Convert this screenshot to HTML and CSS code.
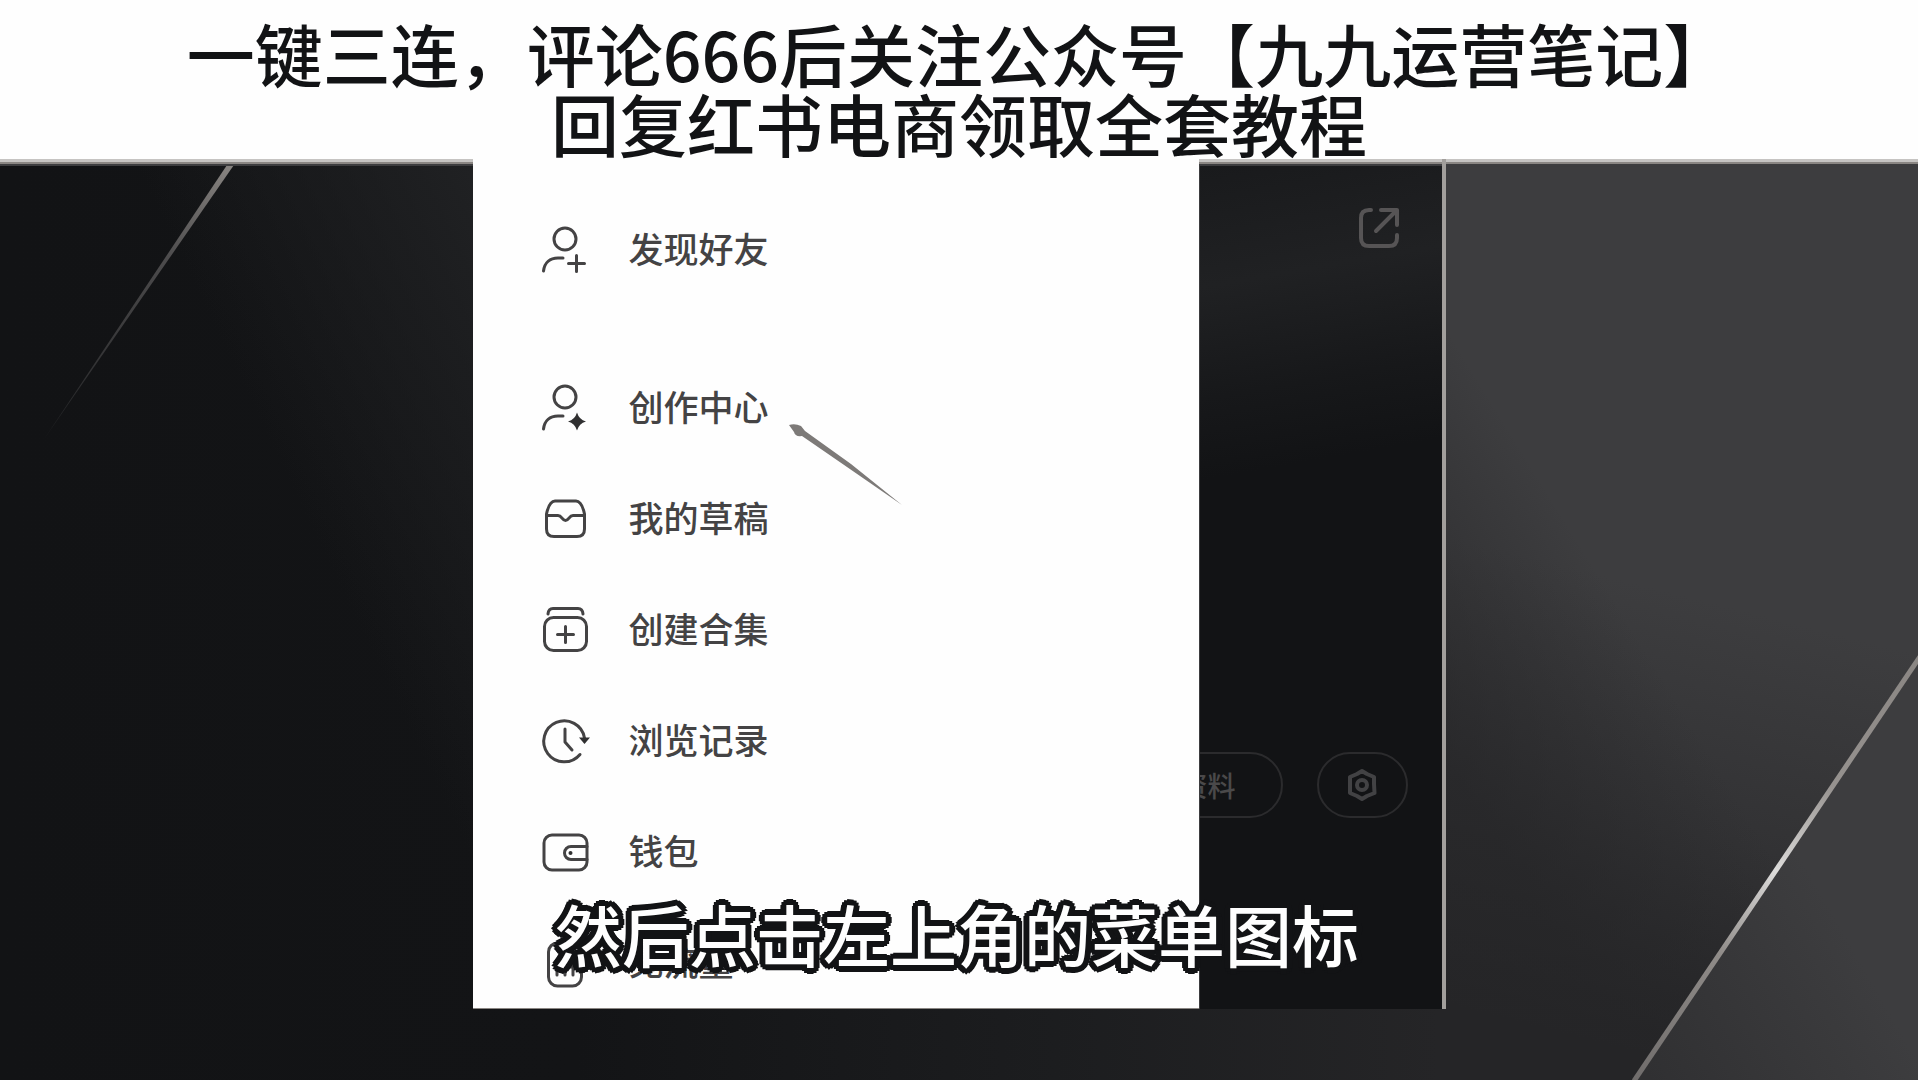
FILE: index.html
```html
<!DOCTYPE html>
<html lang="zh-CN">
<head>
<meta charset="utf-8">
<meta name="viewport" content="width=device-width, initial-scale=1">
<title>九九运营笔记</title>
<link rel="stylesheet" href="styles.css">
</head>
<body>
<header class="banner">
  <h1 class="banner-title">一键三连，评论666后关注公众号【九九运营笔记】<br>回复红书电商领取全套教程</h1>
</header>
<main class="stage">
  <svg class="backdrop" viewBox="0 0 1918 921" preserveAspectRatio="none" aria-hidden="true">
    <defs>
      <linearGradient id="floor" x1="0" y1="0" x2="1" y2="0">
        <stop offset="0" stop-color="#121315"/>
        <stop offset="0.3" stop-color="#131416"/>
        <stop offset="0.55" stop-color="#1c1d1f"/>
        <stop offset="0.75" stop-color="#252527"/>
        <stop offset="1" stop-color="#252527"/>
      </linearGradient>
      <linearGradient id="glow" gradientUnits="userSpaceOnUse" x1="230" y1="200" x2="520" y2="60">
        <stop offset="0" stop-color="#212224" stop-opacity="0"/>
        <stop offset="1" stop-color="#212224"/>
      </linearGradient>
      <linearGradient id="wall" gradientUnits="userSpaceOnUse" x1="1700" y1="440" x2="1590" y2="880">
        <stop offset="0" stop-color="#3d3d3f"/>
        <stop offset="0.5" stop-color="#323234"/>
        <stop offset="1" stop-color="#252527"/>
      </linearGradient>
      <linearGradient id="shade" gradientUnits="userSpaceOnUse" x1="1446" y1="600" x2="1640" y2="480">
        <stop offset="0" stop-color="#252527" stop-opacity="0.7"/>
        <stop offset="1" stop-color="#252527" stop-opacity="0"/>
      </linearGradient>
      <linearGradient id="corner" gradientUnits="userSpaceOnUse" x1="1650" y1="921" x2="1860" y2="800">
        <stop offset="0" stop-color="#303032"/>
        <stop offset="1" stop-color="#3d3d3f"/>
      </linearGradient>
      <linearGradient id="ray-left" gradientUnits="userSpaceOnUse" x1="232" y1="3" x2="45" y2="279">
        <stop offset="0" stop-color="#8a8683"/>
        <stop offset="0.35" stop-color="#4c4b4c"/>
        <stop offset="1" stop-color="#222325"/>
      </linearGradient>
      <linearGradient id="ray-right" gradientUnits="userSpaceOnUse" x1="1918" y1="499" x2="1633" y2="921">
        <stop offset="0" stop-color="#8a8683"/>
        <stop offset="0.3" stop-color="#96928f"/>
        <stop offset="0.5" stop-color="#dcdbda"/>
        <stop offset="0.7" stop-color="#8f8b88"/>
        <stop offset="1" stop-color="#6f6c6b"/>
      </linearGradient>
    </defs>
    <rect width="1918" height="921" fill="url(#floor)"/>
    <rect width="600" height="849" fill="url(#glow)"/>
    <rect x="1446" width="472" height="921" fill="url(#wall)"/>
    <rect x="1446" width="472" height="921" fill="url(#shade)"/>
    <path d="M1918 499V921H1633Z" fill="url(#corner)"/>
    <path d="M236 3L229 3L44 280Z" fill="url(#ray-left)"/>
    <path d="M1920 497L1634 921" stroke="url(#ray-right)" stroke-width="5"/>
    <rect width="1918" height="3" fill="#c6c4c2"/>
    <rect y="3" width="1918" height="2" fill="#8a8683"/>
    <rect y="5" width="1918" height="2" fill="#3d3d3f"/>
  </svg>
  <section class="frame">
    <nav class="menu" aria-label="菜单">
      <ul class="menu-list">
        <li class="menu-row">
          <a class="menu-link" href="#friends">
            <svg class="icon" viewBox="0 0 48 48" aria-hidden="true"><circle cx="24" cy="14" r="11"/><path d="M2.500 46C3.500 37.500 9 33 17 33H22M35.500 30.500V46.500M27.500 38.500H43.500"/></svg>
            <span>发现好友</span>
          </a>
        </li>
        <li class="menu-row menu-row-split">
          <a class="menu-link" href="#creator">
            <svg class="icon" viewBox="0 0 48 48" aria-hidden="true"><circle cx="24" cy="14" r="11"/><path d="M2.500 46C3.500 37.500 9 33 17 33H22"/><path class="solid" d="M36 29.500Q38 36.500 45 38.500Q38 40.500 36 47.500Q34 40.500 27 38.500Q34 36.500 36 29.500Z"/></svg>
            <span>创作中心</span>
          </a>
          <svg class="pointer" viewBox="0 0 114 82" aria-hidden="true"><path d="M0 1Q6 -1 12 2L16 7L62 40L113 81L58 43L13 12Q6 13 5 8Z"/></svg>
        </li>
        <li class="menu-row">
          <a class="menu-link" href="#drafts">
            <svg class="icon" viewBox="0 0 48 48" aria-hidden="true"><path d="M14 7H35C40 7 42 13 43.500 20V35Q43.500 42.500 36 42.500H13Q5.500 42.500 5.500 35V20C7 13 9 7 14 7ZM6 21.500H17C21 21.500 21 26.500 24.500 26.500S28 21.500 32 21.500H43"/></svg>
            <span>我的草稿</span>
          </a>
        </li>
        <li class="menu-row">
          <a class="menu-link" href="#collections">
            <svg class="icon" viewBox="0 0 48 48" aria-hidden="true"><path d="M7 9Q7.500 3.500 12 3.500H37Q41.500 3.500 42 9M24.500 21.500V37.500M16.500 29.500H32.500"/><rect x="3.500" y="12.500" width="42" height="33" rx="9"/></svg>
            <span>创建合集</span>
          </a>
        </li>
        <li class="menu-row">
          <a class="menu-link" href="#history">
            <svg class="icon" viewBox="0 0 48 48" aria-hidden="true"><path d="M43.500 22A20.500 20.500 0 1 0 39 38.500M24 13V26L31 34"/><path class="solid" d="M38 21.500H49L43.500 28Z"/></svg>
            <span>浏览记录</span>
          </a>
        </li>
        <li class="menu-row">
          <a class="menu-link" href="#wallet">
            <svg class="icon" viewBox="0 0 48 48" aria-hidden="true"><rect x="3" y="8" width="43" height="35" rx="8"/><path d="M46 19.500H30A6.500 6.500 0 0 0 30 32.500H46"/><circle class="solid" cx="29.500" cy="26" r="2"/></svg>
            <span>钱包</span>
          </a>
        </li>
        <li class="menu-row">
          <a class="menu-link" href="#data">
            <svg class="icon" viewBox="0 0 48 48" aria-hidden="true"><rect x="7.500" y="5" width="33" height="43" rx="9"/><path d="M16 37V24M24 37V27M32 37V24M16 29H32"/></svg>
            <span>免流量</span>
          </a>
        </li>
      </ul>
    </nav>
    <div class="profile">
      <button class="share" type="button" aria-label="分享">
        <svg class="share-icon" viewBox="0 0 42 42" aria-hidden="true"><path d="M13 3H11Q3 3 3 11V31Q3 39 11 39H31Q39 39 39 31V28M23 3H39V18M39 3L18 24"/></svg>
      </button>
      <div class="profile-actions">
        <button class="pill pill-edit" type="button">资料</button>
        <button class="pill pill-settings" type="button" aria-label="设置">
          <svg class="gear" viewBox="0 0 34 34" aria-hidden="true"><path d="M17 3L22 6L29 9V16L29.500 25L22 28L17 31L12 28L5 25V16L5 9L12 6Z"/><circle cx="17" cy="17" r="5"/></svg>
        </button>
      </div>
    </div>
    <p class="caption">然后点击左上角的菜单图标</p>
  </section>
</main>
</body>
</html>
```
FILE: styles.css
```css
* {
  box-sizing: border-box;
}

body {
  margin: 0;
  min-height: 100vh;
  display: flex;
  flex-direction: column;
  background: #121315;
  color: #121315;
  font-family: "Noto Sans CJK SC", sans-serif;
}

.banner {
  padding: 18px 0 0;
  min-height: 159px;
  background: #fefefe;
  text-align: center;
}

.banner-title {
  margin: 0;
  font-size: 68px;
  line-height: 70px;
  font-weight: 500;
}

.stage {
  position: relative;
  flex: 1;
  display: flex;
  justify-content: center;
  padding-bottom: 72px;
}

.backdrop {
  position: absolute;
  inset: 0;
  width: 100%;
  height: 100%;
}

.frame {
  position: relative;
  display: grid;
  grid-template-columns: 3fr 1fr;
  width: 100%;
  max-width: 973px;
  overflow: hidden;
  background: #121315;
  border-right: 4px solid #a29f9c;
}

.menu {
  padding: 66px 0 22px 68px;
  background: #fefefe;
  border-bottom: 1px solid #8a8683;
}

.menu-list {
  display: flex;
  flex-direction: column;
  gap: 63px;
  margin: 0;
  padding: 0;
  list-style: none;
}

.menu-row {
  position: relative;
}

.menu-row-split {
  margin-top: 47px;
}

.menu-link {
  display: flex;
  align-items: center;
  gap: 40px;
  height: 48px;
  color: #444344;
  font-size: 35px;
  line-height: 44px;
  font-weight: 500;
  text-decoration: none;
}

.menu-link span {
  padding-bottom: 2px;
}

.icon {
  width: 48px;
  height: 48px;
  overflow: visible;
  fill: none;
  stroke: #444344;
  stroke-width: 3;
  stroke-linecap: round;
  stroke-linejoin: round;
}

.icon .solid {
  fill: #303031;
  stroke: none;
}

.pointer {
  position: absolute;
  left: 248px;
  top: 41px;
  width: 114px;
  height: 82px;
  overflow: visible;
  fill: #7d7a78;
}

.profile {
  display: flex;
  flex-direction: column;
  align-items: flex-end;
  overflow: hidden;
  padding: 41px 34px 0 0;
  border-left: 1px solid #6b6968;
  border-top: 7px solid #6b6968;
  border-image: linear-gradient(#c6c4c2 0 3px, #8a8683 3px 5px, #3d3d3f 5px) 7 0 0 1;
  background: linear-gradient(170deg, #191a1c 0, #202123 120px, #17181a 230px, #121315 310px);
}

.share {
  margin-right: 8px;
  padding: 0;
  border: 0;
  background: none;
  line-height: 0;
}

.share-icon {
  width: 42px;
  height: 42px;
  fill: none;
  stroke: #565455;
  stroke-width: 4;
  stroke-linecap: round;
  stroke-linejoin: round;
}

.profile-actions {
  display: flex;
  justify-content: flex-end;
  gap: 34px;
  margin-top: 503px;
}

.pill {
  height: 66px;
  border: 2px solid #2b2b2d;
  border-radius: 33px;
  background: none;
  color: #4a494a;
  font-family: inherit;
  font-size: 28px;
  line-height: 40px;
  white-space: nowrap;
}

.pill-edit {
  flex: none;
  padding: 0 45px;
  font-weight: 500;
}

.pill-settings {
  display: grid;
  place-items: center;
  flex: none;
  width: 91px;
  padding: 0;
}

.gear {
  width: 34px;
  height: 34px;
  fill: none;
  stroke: #424244;
  stroke-width: 4;
  stroke-linejoin: round;
}

.caption {
  position: absolute;
  left: 0;
  right: 0;
  bottom: 36px;
  margin: 0;
  color: #fefefe;
  font-size: 67px;
  line-height: 80px;
  font-weight: 500;
  text-align: center;
  white-space: nowrap;
  text-shadow:
    6px 0 #121315, -6px 0 #121315, 0 6px #121315, 0 -6px #121315,
    5px 3px #121315, 5px -3px #121315, -5px 3px #121315, -5px -3px #121315,
    3px 5px #121315, 3px -5px #121315, -3px 5px #121315, -3px -5px #121315,
    3px 0 #121315, -3px 0 #121315, 0 3px #121315, 0 -3px #121315;
}
```
